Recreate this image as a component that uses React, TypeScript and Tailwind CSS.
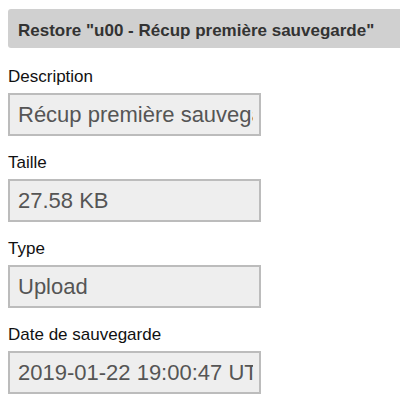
import React from "react";

const fields = [
  { label: "Description", value: "Récup première sauvegarde" },
  { label: "Taille", value: "27.58 KB" },
  { label: "Type", value: "Upload" },
  { label: "Date de sauvegarde", value: "2019-01-22 19:00:47 UTC" },
];

export default function App() {
  return (
    <div
      className="w-[400px] h-[407px] bg-white overflow-hidden pl-[8px] pt-[9px]"
      style={{ fontFamily: '"Liberation Sans", Arial, sans-serif' }}
    >
      <div className="h-[39px] bg-[#d0d0d0] rounded-l-[3px] flex items-center pl-[10px] pt-[4px] text-[17px] font-bold text-[#333] whitespace-nowrap">
        Restore "u00 - Récup première sauvegarde"
      </div>
      <div className="flex flex-col pt-[19px]">
        {fields.map((f, i) => (
          <div key={i} className="flex flex-col mb-[17px]">
            <label className="text-[17px] leading-[20px] text-[#111] mb-[6px]">
              {f.label}
            </label>
            <input
              readOnly
              value={f.value}
              className="w-[253px] h-[43px] bg-[#eeeeee] border-2 border-[#bcbcbc] pl-[8px] pr-[6px] text-[22px] text-[#555] outline-none"
              style={{ fontFamily: '"Liberation Sans", Arial, sans-serif' }}
            />
          </div>
        ))}
      </div>
    </div>
  );
}
